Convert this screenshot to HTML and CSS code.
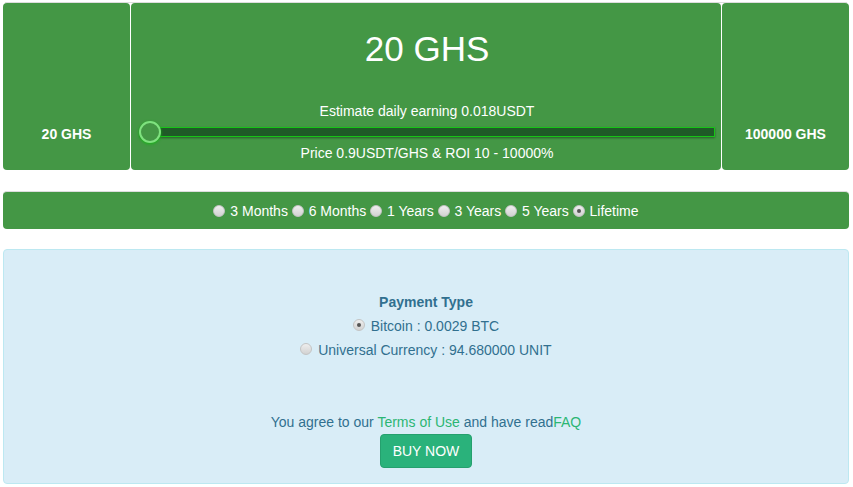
FILE: index.html
```html
<!DOCTYPE html>
<html lang="en">
<head>
    <meta charset="UTF-8">
    <title>Buy Hashpower</title>
    <link rel="stylesheet" href="styles.css">
</head>
<body>
    <div class="top-rule"></div>
    <div class="power-row">
        <div class="cell side">20 GHS</div>
        <div class="cell middle">
            <div class="amount">20 GHS</div>
            <div class="line">Estimate daily earning 0.018USDT</div>
            <div class="slider">
                <div class="track"></div>
                <div class="thumb"></div>
            </div>
            <div class="line">Price 0.9USDT/GHS &amp; ROI 10 - 10000%</div>
        </div>
        <div class="cell side">100000 GHS</div>
    </div>

    <div class="period-bar">
        <label><input type="radio" name="period"> 3 Months</label>
        <label><input type="radio" name="period"> 6 Months</label>
        <label><input type="radio" name="period"> 1 Years</label>
        <label><input type="radio" name="period"> 3 Years</label>
        <label><input type="radio" name="period"> 5 Years</label>
        <label><input type="radio" name="period" checked> Lifetime</label>
    </div>

    <div class="payment">
        <div class="pay-title">Payment Type</div>
        <label class="pay-opt"><input type="radio" name="pay" checked> Bitcoin : 0.0029 BTC</label>
        <label class="pay-opt"><input type="radio" name="pay"> Universal Currency : 94.680000 UNIT</label>
        <div class="agree">You agree to our <a href="#">Terms of Use</a> and have read<a href="#">FAQ</a></div>
        <button type="button" class="buy">BUY NOW</button>
    </div>
</body>
</html>
```

FILE: styles.css
```css
body {
    margin: 0 4px 0 3px;
    font-family: "Liberation Sans", Arial, sans-serif;
    font-size: 14px;
    background: #fff;
}
.top-rule {
    height: 2px;
    border-bottom: 1px solid #ddd;
    margin: 0 2px;
}
.power-row {
    display: flex;
    gap: 1px;
    height: 167px;
}
.cell {
    background: #449745;
    border-radius: 4px;
    color: #fff;
}
.side {
    width: 127px;
    flex: none;
    display: flex;
    align-items: center;
    justify-content: center;
    font-weight: bold;
    padding-top: 95px;
    box-sizing: border-box;
}
.middle {
    flex: 1;
    text-align: center;
    padding: 26px 6px 0 8px;
}
.amount {
    font-size: 35px;
    line-height: 40px;
    margin-bottom: 34px;
}
.line {
    line-height: 16px;
}
.slider {
    position: relative;
    height: 12px;
    margin: 7px 0 7px 0;
    display: flex;
    align-items: center;
}
.track {
    flex: 1;
    height: 10px;
    margin-left: 1px;
    background: #1f5a27;
    border: 1px solid #17c417;
    box-shadow: 0 1px 2px rgba(0, 0, 0, 0.4);
    box-sizing: border-box;
}
.thumb {
    position: absolute;
    left: 0;
    top: -5px;
    width: 18px;
    height: 18px;
    border-radius: 50%;
    background: #449745;
    border: 2px solid #7fe27f;
    box-shadow: 0 1px 3px #16b316;
}
input[type="radio"] {
    appearance: none;
    -webkit-appearance: none;
    box-sizing: border-box;
    width: 12px;
    height: 12px;
    border-radius: 50%;
    border: 1px solid #c4c4c4;
    background: linear-gradient(#eeeeee, #d2d2d2);
    position: relative;
}
input[type="radio"]:checked::after {
    content: "";
    position: absolute;
    left: 3px;
    top: 3px;
    width: 4px;
    height: 4px;
    border-radius: 50%;
    background: #555;
}
.period-bar {
    margin-top: 21px;
    border-top: 1px solid #ddd;
    background: #449745;
    border-radius: 4px;
    color: #fff;
    text-align: center;
    height: 37px;
    line-height: 38px;
}
.period-bar input {
    margin: 0 1px 0 0;
    vertical-align: -1px;
}
.payment {
    margin-top: 20px;
    background: #d9edf7;
    border: 1px solid #bce8f1;
    border-radius: 4px;
    color: #31708f;
    text-align: center;
    padding: 42px 0 15px;
}
.pay-title {
    font-weight: bold;
    line-height: 20px;
    margin-bottom: 4px;
}
.pay-opt {
    display: block;
    line-height: 20px;
    margin-bottom: 4px;
}
.pay-opt input {
    margin: 0 2px 0 0;
    vertical-align: 0;
}
.agree {
    margin-top: 52px;
    line-height: 20px;
}
.agree a {
    color: #2bb673;
    text-decoration: none;
}
.buy {
    margin-top: 2px;
    background: #2ab27b;
    border: 1px solid #25a06e;
    border-radius: 4px;
    color: #fff;
    font-family: inherit;
    font-size: 14px;
    padding: 8px 12px;
    line-height: 16px;
    cursor: pointer;
}
```
